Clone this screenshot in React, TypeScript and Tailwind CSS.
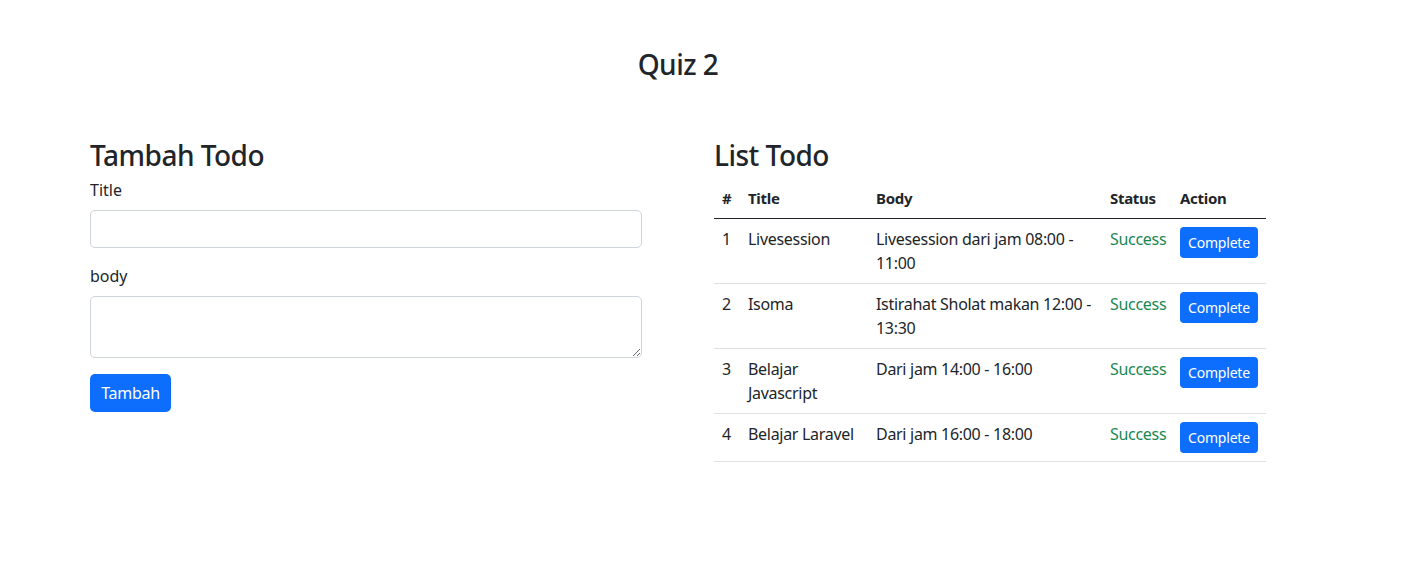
import React from "react";

// ─── Data ─────────────────────────────────────────────────────────────────────

type Todo = {
  id: number;
  title: string[];
  body: string[];
  status: string;
};

const todos: Todo[] = [
  { id: 1, title: ["Livesession"], body: ["Livesession dari jam 08:00 -", "11:00"], status: "Success" },
  { id: 2, title: ["Isoma"], body: ["Istirahat Sholat makan 12:00 -", "13:30"], status: "Success" },
  { id: 3, title: ["Belajar", "Javascript"], body: ["Dari jam 14:00 - 16:00"], status: "Success" },
  { id: 4, title: ["Belajar Laravel"], body: ["Dari jam 16:00 - 18:00"], status: "Success" },
];

const font = { fontFamily: '"Noto Sans", "Liberation Sans", sans-serif' };

// ─── Lines helper (keeps the wrapping of the original) ───────────────────────

function Lines({ lines }: { lines: string[] }) {
  return (
    <>
      {lines.map((l, i) => (
        <span key={i} className="block whitespace-nowrap">
          {l}
        </span>
      ))}
    </>
  );
}

// ─── Form ─────────────────────────────────────────────────────────────────────

function TambahTodo() {
  return (
    <div>
      <h3 className="text-[28px] font-medium leading-[1.2] mb-[6px] tracking-[-0.5px]">Tambah Todo</h3>
      <label className="block text-base leading-6 mb-2">Title</label>
      <input
        type="text"
        className="block w-full h-[38px] rounded-[5px] border border-[#ced4da] bg-white px-3 outline-none"
      />
      <label className="block text-base leading-6 mt-4 mb-2">body</label>
      <textarea className="block w-full h-[62px] rounded-[5px] border border-[#ced4da] bg-white px-3 py-1.5 outline-none" />
      <button className="mt-4 h-[38px] w-[81px] rounded-[5px] bg-[#0d6efd] text-white text-base tracking-[-0.3px]">
        Tambah
      </button>
    </div>
  );
}

// ─── Table ────────────────────────────────────────────────────────────────────

function ListTodo() {
  return (
    <div>
      <h3 className="text-[28px] font-medium leading-[1.2] mb-[6px] tracking-[-0.5px]">List Todo</h3>
      <table className="w-full table-fixed border-collapse text-base leading-6 tracking-[-0.3px]">
        <colgroup>
          <col className="w-[26px]" />
          <col className="w-[128px]" />
          <col className="w-[234px]" />
          <col className="w-[70px]" />
          <col className="w-[94px]" />
        </colgroup>
        <thead>
          <tr className="border-b border-[#212529] text-left">
            <th className="px-2 py-2 font-bold text-[15px]">#</th>
            <th className="px-2 py-2 font-bold text-[15px]">Title</th>
            <th className="px-2 py-2 font-bold text-[15px]">Body</th>
            <th className="px-2 py-2 font-bold text-[15px]">Status</th>
            <th className="px-2 py-2 font-bold text-[15px]">Action</th>
          </tr>
        </thead>
        <tbody>
          {todos.map((t) => (
            <tr key={t.id} className="border-b border-[#dee2e6] align-top">
              <td className="px-2 py-2">{t.id}</td>
              <td className="px-2 py-2">
                <Lines lines={t.title} />
              </td>
              <td className="px-2 py-2">
                <Lines lines={t.body} />
              </td>
              <td className="px-2 py-2 text-[#198754]">{t.status}</td>
              <td className="px-2 py-2">
                <button className="h-[31px] px-2 rounded-[4px] bg-[#0d6efd] text-white text-sm leading-[21px] tracking-[-0.2px]">
                  Complete
                </button>
              </td>
            </tr>
          ))}
        </tbody>
      </table>
    </div>
  );
}

// ─── Page ─────────────────────────────────────────────────────────────────────

export default function App() {
  return (
    <div className="min-h-[568px] bg-white text-[#212529]" style={font}>
      <div className="w-[1176px] ml-[90px] pt-12">
        <h3 className="text-center text-[28px] font-medium leading-[1.2] tracking-[-0.5px]">Quiz 2</h3>
        <div className="mt-[57px] grid grid-cols-[552px_552px] gap-x-[72px]">
          <TambahTodo />
          <ListTodo />
        </div>
      </div>
    </div>
  );
}
